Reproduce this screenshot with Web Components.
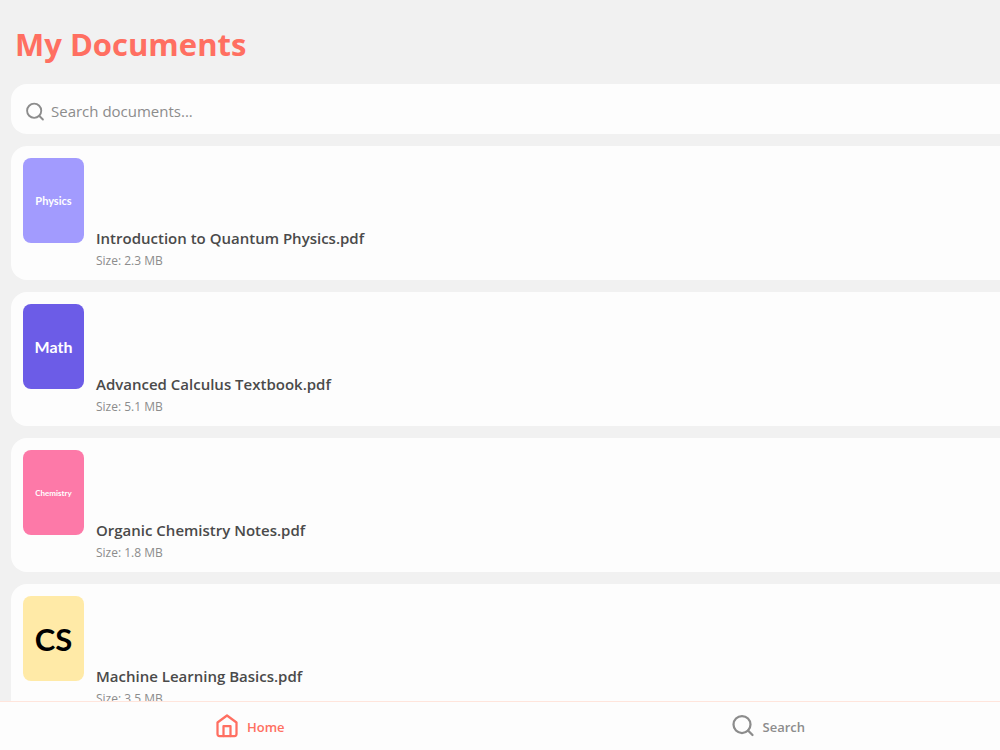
<!DOCTYPE html>
<html lang="en">
<head>
<meta charset="utf-8">
<meta name="viewport" content="width=device-width, initial-scale=1">
<title>My Documents</title>
<style>
  html, body {
    height: 100%;
    margin: 0;
  }
  body {
    overflow: hidden;
    font-family: "Open Sans", "Noto Sans", sans-serif;
    color: #4a4a4a;
    background: #f1f1f1;
    --accent: #ff6f61;
    --muted: #8c8c8c;
    --surface: #fdfdfd;
    --edge: 28px;
  }
</style>
</head>
<body>
<docs-app>
  <search-box placeholder="Search documents..."></search-box>
  <doc-card name="Introduction to Quantum Physics.pdf" size="2.3 MB">
    <doc-cover color="#a29bfe" text-size="11px">Physics</doc-cover>
  </doc-card>
  <doc-card name="Advanced Calculus Textbook.pdf" size="5.1 MB">
    <doc-cover color="#6c5ce7" text-size="16px">Math</doc-cover>
  </doc-card>
  <doc-card name="Organic Chemistry Notes.pdf" size="1.8 MB">
    <doc-cover color="#fd79a8" text-size="8px">Chemistry</doc-cover>
  </doc-card>
  <doc-card name="Machine Learning Basics.pdf" size="3.5 MB">
    <doc-cover color="#ffeaa7" text-color="#000" text-size="31px">CS</doc-cover>
  </doc-card>
  <nav-bar slot="nav">
    <nav-item icon="home" href="#home" active>Home</nav-item>
    <nav-item icon="search" href="#search">Search</nav-item>
  </nav-bar>
</docs-app>

<script>
const ICONS = {
  search: '<circle cx="11" cy="10.500" r="8.500"/><path d="M17 16.500 21.500 21"/>',
  home: '<path d="M2.500 8.500 12 1.500l9.500 7V20a2 2 0 0 1-2 2h-15a2 2 0 0 1-2-2z"/><path d="M8.500 22V12h7v10"/>'
};

class UiIcon extends HTMLElement {
  constructor() {
    super();
    this.attachShadow({ mode: 'open' });
  }

  connectedCallback() {
    this.shadowRoot.innerHTML = `
      <style>
        :host { display: block; flex: none; width: 24px; height: 24px; }
        svg { display: block; width: 100%; height: 100%; }
      </style>
      <svg viewBox="0 0 24 24" fill="none" stroke="currentColor" stroke-width="2.25"
        stroke-linecap="round" stroke-linejoin="round" aria-hidden="true">${ICONS[this.getAttribute('name')]}</svg>
    `;
  }
}

class DocsApp extends HTMLElement {
  constructor() {
    super();
    this.attachShadow({ mode: 'open' });
    this.shadowRoot.innerHTML = `
      <style>
        :host {
          display: flex;
          flex-direction: column;
          height: 100%;
        }
        main {
          flex: 1;
          min-height: 0;
          overflow: hidden;
        }
        h1 {
          margin: 0;
          padding: 22px 15px 18px;
          font-size: 31px;
          line-height: 44px;
          font-weight: 700;
          color: var(--accent);
        }
        .list {
          display: flex;
          flex-direction: column;
          gap: 12px;
          padding-left: 11px;
        }
      </style>
      <main>
        <h1>My Documents</h1>
        <div class="list"><slot></slot></div>
      </main>
      <slot name="nav"></slot>
    `;
  }
}

class SearchBox extends HTMLElement {
  constructor() {
    super();
    this.attachShadow({ mode: 'open' });
  }

  connectedCallback() {
    const placeholder = this.getAttribute('placeholder') || '';

    this.shadowRoot.innerHTML = `
      <style>
        :host { display: block; }
        label {
          display: flex;
          align-items: center;
          gap: 6px;
          height: 46px;
          padding: 4px 0 0 14px;
          border-radius: 16px 0 0 16px;
          background: var(--surface);
          color: var(--muted);
        }
        ui-icon {
          width: 20px;
          height: 20px;
          padding-top: 2px;
        }
        input {
          flex: 1;
          min-width: 0;
          padding: 0;
          border: 0;
          outline: 0;
          background: none;
          font: 15px/24px "Open Sans", "Noto Sans", sans-serif;
          color: #4a4a4a;
        }
        input::placeholder { color: var(--muted); opacity: 1; }
      </style>
      <label>
        <ui-icon name="search"></ui-icon>
        <input type="search" placeholder="${placeholder}" aria-label="${placeholder}">
      </label>
    `;
  }
}

class DocCard extends HTMLElement {
  constructor() {
    super();
    this.attachShadow({ mode: 'open' });
  }

  connectedCallback() {
    this.shadowRoot.innerHTML = `
      <style>
        :host { display: block; }
        article {
          display: flex;
          gap: 12px;
          min-height: 110px;
          padding: 12px;
          border-radius: 16px 0 0 16px;
          background: var(--surface);
        }
        .info { align-self: flex-end; }
        h2, p { margin: 0; }
        h2 {
          margin-bottom: 4px;
          font-size: 15px;
          line-height: 24px;
          font-weight: 600;
        }
        p {
          font-size: 12px;
          line-height: 14px;
          color: var(--muted);
        }
      </style>
      <article>
        <slot></slot>
        <div class="info">
          <h2>${this.getAttribute('name')}</h2>
          <p>Size: ${this.getAttribute('size')}</p>
        </div>
      </article>
    `;
  }
}

class DocCover extends HTMLElement {
  constructor() {
    super();
    this.attachShadow({ mode: 'open' });
  }

  connectedCallback() {
    this.shadowRoot.innerHTML = `
      <style>
        :host {
          display: flex;
          flex: none;
          align-self: flex-start;
          align-items: center;
          justify-content: center;
          width: 61px;
          height: 85px;
          border-radius: 8px;
          background: ${this.getAttribute('color')};
          color: ${this.getAttribute('text-color') || '#fff'};
          font: 700 ${this.getAttribute('text-size')} Lato, sans-serif;
        }
      </style>
      <slot></slot>
    `;
  }
}

class NavBar extends HTMLElement {
  constructor() {
    super();
    this.attachShadow({ mode: 'open' });
    this.shadowRoot.innerHTML = `
      <style>
        :host {
          display: block;
          flex: none;
          overflow: hidden;
          border-top: 1px solid #ffe5dc;
          background: var(--surface);
        }
        nav {
          display: flex;
          justify-content: space-around;
          height: 48px;
          margin: 0 calc(-1 * var(--edge)) 0 -8px;
        }
      </style>
      <nav><slot></slot></nav>
    `;
  }
}

class NavItem extends HTMLElement {
  constructor() {
    super();
    this.attachShadow({ mode: 'open' });
  }

  connectedCallback() {
    this.shadowRoot.innerHTML = `
      <style>
        :host { display: block; color: var(--muted); }
        :host([active]) { color: var(--accent); }
        a {
          display: flex;
          align-items: center;
          gap: 8px;
          height: 100%;
          color: inherit;
          text-decoration: none;
          font-size: 13px;
          font-weight: 600;
        }
        span { padding-top: 2px; }
      </style>
      <a href="${this.getAttribute('href')}">
        <ui-icon name="${this.getAttribute('icon')}"></ui-icon>
        <span><slot></slot></span>
      </a>
    `;
  }
}

customElements.define('ui-icon', UiIcon);
customElements.define('docs-app', DocsApp);
customElements.define('search-box', SearchBox);
customElements.define('doc-card', DocCard);
customElements.define('doc-cover', DocCover);
customElements.define('nav-bar', NavBar);
customElements.define('nav-item', NavItem);
</script>
</body>
</html>
